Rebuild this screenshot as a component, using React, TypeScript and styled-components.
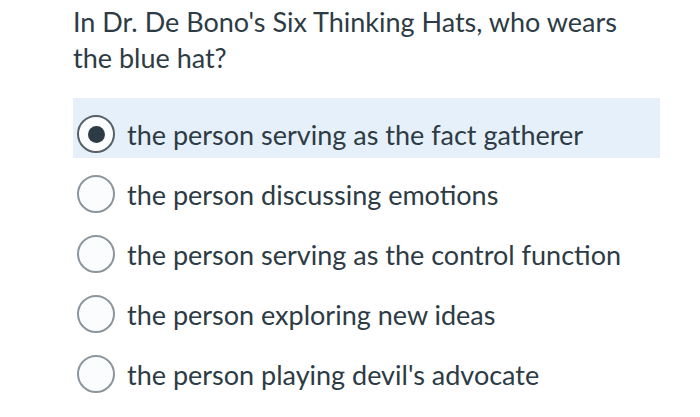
import React, { useState } from "react";
import styled, { createGlobalStyle } from "styled-components";

const GlobalStyle = createGlobalStyle`
  body {
    margin: 0;
    background: #fff;
    font-family: Lato, "Noto Sans", sans-serif;
    color: #2d3b45;
  }
`;

const Page = styled.div`
  width: 700px;
  height: 417px;
  padding: 4px 40px 0 73px;
  box-sizing: border-box;
`;

const Question = styled.h2`
  margin: 0 0 22px;
  font-size: 27px;
  font-weight: 400;
  line-height: 36px;
`;

const OptionList = styled.ul`
  list-style: none;
  margin: 0;
  padding: 0;
  display: flex;
  flex-direction: column;
  width: 587px;
`;

const Option = styled.li<{ $selected?: boolean }>`
  height: 60px;
  box-sizing: border-box;
  padding: 12px 0 0 4px;
  display: flex;
  align-items: center;
  gap: 12px;
  background: ${(p) => (p.$selected ? "#e6f0fa" : "transparent")};
  font-size: 27px;
  cursor: pointer;
`;

const Radio = styled.span<{ $selected?: boolean }>`
  width: 38px;
  height: 38px;
  box-sizing: border-box;
  border-radius: 50%;
  border: 2px solid ${(p) => (p.$selected ? "#56626b" : "#8d969e")};
  background: #fbfcfe;
  display: flex;
  align-items: center;
  justify-content: center;
  flex-shrink: 0;
  &::after {
    content: "";
    width: 17px;
    height: 17px;
    border-radius: 50%;
    background: #2d3b45;
    display: ${(p) => (p.$selected ? "block" : "none")};
  }
`;

const answers = [
  "the person serving as the fact gatherer",
  "the person discussing emotions",
  "the person serving as the control function",
  "the person exploring new ideas",
  "the person playing devil's advocate",
];

export default function App() {
  const [picked, setPicked] = useState(0);
  return (
    <Page>
      <GlobalStyle />
      <Question>
        In Dr. De Bono's Six Thinking Hats, who wears
        <br />
        the blue hat?
      </Question>
      <OptionList>
        {answers.map((a, i) => (
          <Option key={a} $selected={picked === i} onClick={() => setPicked(i)}>
            <Radio $selected={picked === i} />
            <span>{a}</span>
          </Option>
        ))}
      </OptionList>
    </Page>
  );
}
